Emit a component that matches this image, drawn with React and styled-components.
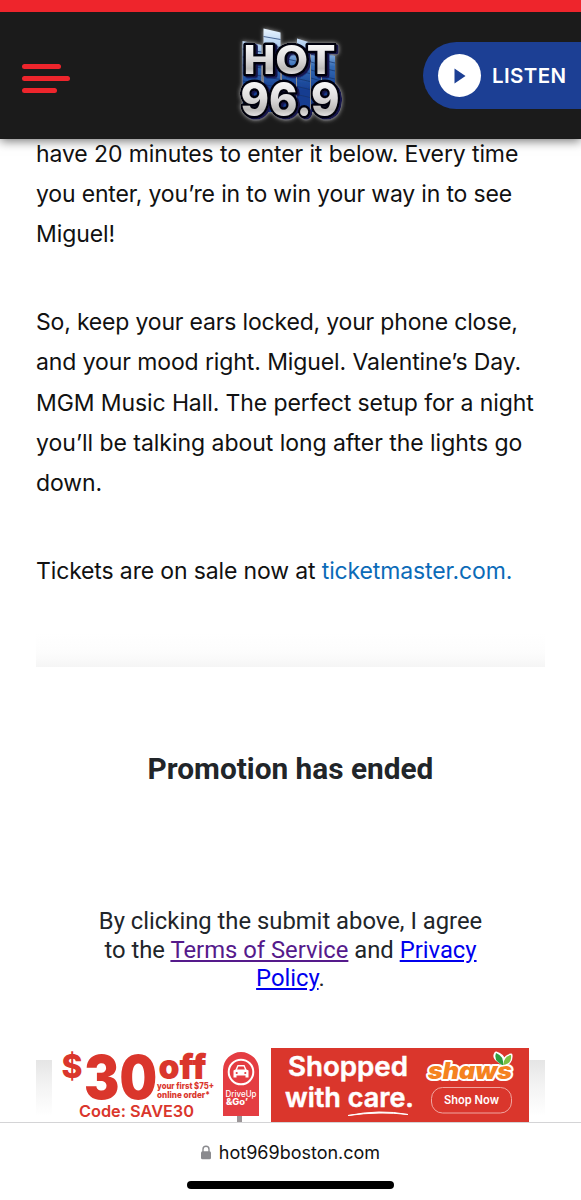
import React from "react";
import styled, { createGlobalStyle } from "styled-components";

const GlobalStyle = createGlobalStyle`
  * {
    box-sizing: border-box;
  }

  body {
    margin: 0;
    background: #fff;
    overflow: hidden;
  }
`;

const Page = styled.div`
  display: flex;
  flex-direction: column;
  width: 581px;
  height: 1200px;
  overflow: hidden;
  background: #fff;
  font-family: Inter, "Liberation Sans", sans-serif;
`;

const HeaderBar = styled.header`
  display: grid;
  grid-template-columns: 1fr 110px 1fr;
  align-items: center;
  flex: none;
  height: 139px;
  border-top: 12.5px solid #ee252c;
  background: #1b1b1b;
  box-shadow: 0 2px 10px rgba(0, 0, 0, 0.55);
  position: relative;
  z-index: 1;
`;

const MenuButton = styled.button`
  display: flex;
  flex-direction: column;
  align-items: flex-start;
  gap: 7.5px;
  margin-top: 6px;
  padding: 0 0 0 22px;
  border: 0;
  background: none;
`;

const MenuLine = styled.span`
  width: ${(props) => props.$width}px;
  height: 4.5px;
  border-radius: 3px;
  background: #ee252c;
`;

const LogoImage = styled.svg`
  display: block;
  width: 110px;
  height: 104px;
`;

const ListenButton = styled.button`
  display: flex;
  align-items: center;
  justify-self: end;
  gap: 11px;
  width: 158px;
  height: 67px;
  padding: 0 0 0 15px;
  border: 0;
  border-radius: 34px 0 0 34px;
  background: #1c3f94;
  color: #fff;
  font-family: Inter, sans-serif;
  font-size: 20.5px;
  font-weight: 600;
  letter-spacing: 0.4px;
`;

const PlayCircle = styled.span`
  display: flex;
  align-items: center;
  justify-content: center;
  flex: none;
  width: 43px;
  height: 43px;
  border-radius: 50%;
  background: #fff;
`;

const Article = styled.article`
  flex: none;
  margin-top: -5px;
  padding: 0 30px 0 36px;
  color: #111;
  font-size: 23px;
  line-height: 40.2px;
`;

const Paragraph = styled.p`
  margin: 0 0 47.5px;
`;

const Line = styled.span`
  display: block;
  white-space: nowrap;
  letter-spacing: ${(props) => props.$track || 0}px;
`;

const TicketLink = styled.a`
  color: #0b6bb8;
  text-decoration: none;
`;

const TopShade = styled.div`
  flex: none;
  width: 509px;
  height: 34px;
  margin: -5px 0 0 36px;
  background: linear-gradient(#fff, #fdfdfd 50%, #fafafa 75%, #f5f5f5);
`;

const Contest = styled.section`
  display: flex;
  flex-direction: column;
  align-items: center;
  flex: none;
  height: 381px;
  color: #212529;
  font-family: Roboto, sans-serif;
  text-align: center;
`;

const ContestTitle = styled.h2`
  margin: 84px 0 0;
  font-size: 29.8px;
  font-weight: 700;
  line-height: 36px;
  white-space: nowrap;
`;

const Terms = styled.p`
  margin: 120px 0 0;
  font-size: 23.8px;
  line-height: 28.3px;
`;

const TermsLine = styled.span`
  display: block;
  white-space: nowrap;
`;

const TermsLink = styled.a`
  color: ${(props) => (props.$visited ? "#551a8b" : "#0000ee")};
  text-decoration: underline;
`;

const AdRow = styled.aside`
  display: grid;
  grid-template-columns: 16px 477px 16px;
  flex: none;
  width: 509px;
  height: 74px;
  margin-left: 36px;
`;

const SideShade = styled.div`
  height: 62px;
  margin-top: 12px;
  background: linear-gradient(#e5e5e5, #f3f3f3 40%, #fff 90%);
`;

const AdImage = styled.svg`
  display: block;
  width: 477px;
  height: 74px;
`;

const AddressBar = styled.footer`
  display: flex;
  flex-direction: column;
  align-items: center;
  flex: 1;
  padding-top: 17px;
  border-top: 1px solid #d4d4d6;
  background: #fff;
`;

const Address = styled.div`
  display: flex;
  align-items: center;
  gap: 8px;
  height: 24px;
  color: #111;
  font-size: 18px;
  white-space: nowrap;
`;

const HomeIndicator = styled.div`
  width: 207px;
  height: 7.5px;
  margin-top: 17px;
  border-radius: 4px;
  background: #000;
`;

// x, top edge and width of each equalizer column behind the logo
const columns = [
  [16.5, 25, 19],
  [37.5, 12.5, 17],
  [56, 34, 14],
  [71, 22.5, 13],
  [85, 30, 10],
  [96, 36, 13],
];

function LogoText(props) {
  return (
    <text
      x={props.x}
      y={props.y}
      fill="url(#silver)"
      stroke="#05050c"
      strokeWidth="5"
      strokeLinejoin="round"
      paintOrder="stroke"
      fontFamily="Inter, sans-serif"
      fontWeight="800"
      fontSize={props.size}
      textLength={props.width}
      lengthAdjust="spacingAndGlyphs"
    >
      {props.children}
    </text>
  );
}

function Logo() {
  return (
    <LogoImage viewBox="10 8 110 104" role="img" aria-label="HOT 96.9">
      <defs>
        <linearGradient id="silver" x1="0" y1="0" x2="0" y2="1">
          <stop offset="0.15" stopColor="#fff" />
          <stop offset="0.5" stopColor="#dddbdc" />
          <stop offset="0.7" stopColor="#bdbbb9" />
          <stop offset="0.85" stopColor="#f3f1f1" />
        </linearGradient>
        <linearGradient id="tower" gradientUnits="userSpaceOnUse" x1="0" y1="14" x2="0" y2="90">
          <stop offset="0" stopColor="#e5f2fe" />
          <stop offset="0.25" stopColor="#a4c5ec" />
          <stop offset="0.48" stopColor="#336bb5" />
          <stop offset="0.8" stopColor="#153d91" />
        </linearGradient>
        <filter id="glow" x="-20%" y="-20%" width="140%" height="140%">
          <feDropShadow dx="0" dy="0" stdDeviation="2" floodColor="#fff" floodOpacity="0.6" />
        </filter>
        <filter id="depth" x="-20%" y="-20%" width="140%" height="140%">
          <feDropShadow dx="2" dy="1.5" stdDeviation="0" floodColor="#17124e" />
        </filter>
      </defs>
      <g filter="url(#glow)">
        {columns.map(([x, y, width]) => (
          <path key={x} d={`M${x} ${y}l${width} 4V96h-${width}z`} fill="url(#tower)" />
        ))}
        {columns.map(([x, y, width]) =>
          [8, 16, 24, 32, 40, 48, 56].map((step) => (
            <path
              key={x + "-" + step}
              d={`M${x} ${y + step}l${width} 3`}
              stroke="#123268"
              strokeWidth="0.7"
            />
          ))
        )}
        <g filter="url(#depth)">
          <LogoText x={17.5} y={57.5} size={40} width={92}>HOT</LogoText>
          <LogoText x={14.5} y={99.7} size={47} width={99}>96.9</LogoText>
        </g>
      </g>
    </LogoImage>
  );
}

function Header() {
  return (
    <HeaderBar>
      <MenuButton aria-label="Menu">
        <MenuLine $width={39} />
        <MenuLine $width={48} />
        <MenuLine $width={35} />
      </MenuButton>
      <Logo />
      <ListenButton>
        <PlayCircle>
          <svg width="13" height="16" viewBox="0 0 13 16">
            <path d="M1.5 0.5L12.5 8L1.5 15.5z" fill="#1c3f94" />
          </svg>
        </PlayCircle>
        LISTEN
      </ListenButton>
    </HeaderBar>
  );
}

function AdText(props) {
  return (
    <text
      x={props.x}
      y={props.y}
      fill={props.fill || "#da362c"}
      stroke={props.fill || "#da362c"}
      strokeWidth={props.bolder || 0}
      fontFamily="Inter, sans-serif"
      fontSize={props.size}
      fontWeight={props.weight || 600}
      textLength={props.width}
      lengthAdjust="spacingAndGlyphs"
    >
      {props.children}
    </text>
  );
}

function ShawsLogo() {
  return (
    <g>
      <text
        x="376"
        y="31"
        fill="#f58220"
        stroke="#fff"
        strokeWidth="4"
        strokeLinejoin="round"
        paintOrder="stroke"
        fontFamily="Inter, sans-serif"
        fontSize="23"
        fontWeight="900"
        fontStyle="italic"
        textLength="84"
        lengthAdjust="spacingAndGlyphs"
      >
        shaws
      </text>
      <path
        d="M450 15Q440 10 444 5Q451 7 452 13Q454 8 459 7Q460 16 450 17z"
        fill="#fff"
        stroke="#fff"
        strokeWidth="3"
        strokeLinejoin="round"
      />
      <path d="M450 17Q441 12 444 5Q452 8 451 17z" fill="#2f9e41" />
      <path d="M451 17Q452 8 459 7Q460 16 451 17z" fill="#7cc142" />
    </g>
  );
}

function Banner() {
  return (
    <AdImage viewBox="0 0 477 74">
      <rect width="477" height="74" fill="#fff" />
      <AdText x={9.5} y={30} size={32} weight={800} width={21}>$</AdText>
      <AdText x={32} y={51} size={60} weight={900} width={73}>30</AdText>
      <AdText x={106.5} y={31} size={35} weight={900} width={48}>off</AdText>
      <AdText x={105} y={40.5} size={9} weight={800} width={57}>your first $75+</AdText>
      <AdText x={105} y={49.5} size={9} weight={800} width={53}>online order*</AdText>
      <AdText x={27} y={69} size={16.5} weight={600} width={115}>Code: SAVE30</AdText>

      <rect x="185" y="66" width="5" height="8" fill="#9b9698" />
      <path d="M171 68V22a17.5 17.5 0 0 1 36 0v46z" fill="#e43d42" />
      <circle cx="189" cy="24" r="12.3" fill="none" stroke="#fff" strokeWidth="2" />
      <path
        d="M181.5 22.5l2-1 2-4.5h7l2 4.5 2 1v7h-3v-2h-9v2h-3z"
        fill="#fff"
      />
      <path d="M186.3 18.5h5.4l1.2 3h-7.8z" fill="#e43d42" />
      <circle cx="184.7" cy="25" r="1.1" fill="#e43d42" />
      <circle cx="193.3" cy="25" r="1.1" fill="#e43d42" />
      <AdText x={173.5} y={49} size={8.5} weight={500} width={31} fill="#fff">DriveUp</AdText>
      <AdText x={174} y={57} size={8.5} weight={800} width={22} fill="#fff">&amp;Go’</AdText>

      <rect x="219" width="258" height="74" fill="#da362c" />
      <AdText x={236} y={28} size={26.5} width={120} bolder={0.5} fill="#fff">Shopped</AdText>
      <AdText x={233} y={59} size={26.5} width={129} bolder={0.5} fill="#fff">with care.</AdText>
      <path d="M296 67.5Q328 61 356 66.5Q328 63 296 67.5z" fill="#fff" stroke="#fff" strokeWidth="1" />
      <ShawsLogo />
      <rect x="379.5" y="39.5" width="80" height="25.5" rx="11" fill="none" stroke="#f0a5a0" />
      <AdText x={392} y={55.5} size={11.5} width={55} fill="#fff">Shop Now</AdText>
    </AdImage>
  );
}

function App() {
  return (
    <Page>
      <GlobalStyle />
      <Header />
      <Article>
        <Paragraph>
          <Line $track={-0.11}>have 20 minutes to enter it below. Every time</Line>
          <Line $track={-0.17}>you enter, you’re in to win your way in to see</Line>
          <Line $track={-0.1}>Miguel!</Line>
        </Paragraph>
        <Paragraph>
          <Line $track={-0.18}>So, keep your ears locked, your phone close,</Line>
          <Line $track={-0.1}>and your mood right. Miguel. Valentine’s Day.</Line>
          <Line $track={-0.1}>MGM Music Hall. The perfect setup for a night</Line>
          <Line $track={-0.04}>you’ll be talking about long after the lights go</Line>
          <Line $track={-0.1}>down.</Line>
        </Paragraph>
        <Paragraph>
          <Line $track={-0.14}>
            Tickets are on sale now at <TicketLink>ticketmaster.com.</TicketLink>
          </Line>
        </Paragraph>
      </Article>
      <TopShade />
      <Contest>
        <ContestTitle>Promotion has ended</ContestTitle>
        <Terms>
          <TermsLine>By clicking the submit above, I agree</TermsLine>
          <TermsLine>
            to the <TermsLink $visited>Terms of Service</TermsLink> and <TermsLink>Privacy</TermsLink>
          </TermsLine>
          <TermsLine>
            <TermsLink>Policy</TermsLink>.
          </TermsLine>
        </Terms>
      </Contest>
      <AdRow>
        <SideShade />
        <Banner />
        <SideShade />
      </AdRow>
      <AddressBar>
        <Address>
          <svg width="10" height="15" viewBox="0 0 10 15">
            <path d="M2 7V4.2a3 3 0 0 1 6 0V7" fill="none" stroke="#8a8a8e" strokeWidth="1.4" />
            <rect y="6.3" width="10" height="8" rx="1.5" fill="#8a8a8e" />
          </svg>
          hot969boston.com
        </Address>
        <HomeIndicator />
      </AddressBar>
    </Page>
  );
}

export default App;
